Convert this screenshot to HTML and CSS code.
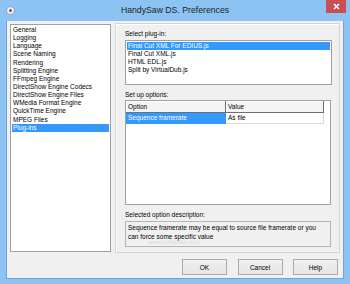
FILE: index.html
```html
<!DOCTYPE html>
<html lang="en">
<head>
    <meta charset="UTF-8">
    <title>HandySaw DS. Preferences</title>
    <link rel="stylesheet" href="styles.css">
</head>
<body>
    <div class="window">
        <div class="titlebar">
            <span class="app-icon"></span>
            <span class="title">HandySaw DS. Preferences</span>
            <button class="close-button">
                <svg width="7" height="7" viewBox="0 0 7 7"><path d="M1 1L6 6M6 1L1 6" stroke="#fff" stroke-width="1.6"/></svg>
            </button>
        </div>

        <div class="client">
            <div class="main">
                <ul class="page-list">
                    <li>General</li>
                    <li>Logging</li>
                    <li>Language</li>
                    <li>Scene Naming</li>
                    <li>Rendering</li>
                    <li>Splitting Engine</li>
                    <li>FFmpeg Engine</li>
                    <li>DirectShow Engine Codecs</li>
                    <li>DirectShow Engine Files</li>
                    <li>WMedia Format Engine</li>
                    <li>QuickTime Engine</li>
                    <li>MPEG Files</li>
                    <li class="selected">Plug-ins</li>
                </ul>

                <div class="panel">
                    <div class="label">Select plug-in:</div>
                    <ul class="plugin-list">
                        <li class="selected">Final Cut XML For EDIUS.js</li>
                        <li>Final Cut XML.js</li>
                        <li>HTML EDL.js</li>
                        <li>Split by VirtualDub.js</li>
                    </ul>

                    <div class="label spaced">Set up options:</div>
                    <div class="options">
                        <div class="options-row options-header">
                            <div class="cell">Option</div>
                            <div class="cell">Value</div>
                        </div>
                        <div class="options-row">
                            <div class="cell selected">Sequence framerate</div>
                            <div class="cell">As file</div>
                        </div>
                    </div>

                    <div class="label spaced">Selected option description:</div>
                    <div class="description">
                        <div>Sequence framerate may be equal to source file framerate or you</div>
                        <div>can force some specific value</div>
                        <span class="watermark">www.softpedia.com</span>
                    </div>
                </div>
            </div>

            <div class="buttons">
                <button class="dialog-button">OK</button>
                <button class="dialog-button">Cancel</button>
                <button class="dialog-button">Help</button>
            </div>
        </div>
    </div>
</body>
</html>
```

FILE: styles.css
```css
/* Base */
body {
    margin: 0;
    font-family: "Liberation Sans", Arial, sans-serif;
    font-size: 6.5px;
    color: #000;
    background-color: #8cc3f2;
}

ul {
    list-style: none;
    margin: 0;
}

.window {
    width: 350px;
    height: 284px;
    display: flex;
    flex-direction: column;
    background-color: #8cc3f2;
}

/* Title bar */
.titlebar {
    height: 21px;
    display: grid;
    grid-template-columns: 1fr auto 1fr;
    align-items: start;
}

.app-icon {
    margin: 7px 0 0 7px;
    width: 7px;
    height: 7px;
    box-sizing: border-box;
    border-radius: 50%;
    background-color: #50607e;
    border: 2px solid #eef0f4;
    box-shadow: 0 0 0 0.6px #8a909c;
}

.title {
    font-size: 8.7px;
    line-height: 20px;
    color: #1e1e1e;
}

.close-button {
    justify-self: end;
    margin-right: 4px;
    width: 20px;
    height: 13px;
    padding: 0;
    border: none;
    background-color: #c75050;
    display: flex;
    align-items: center;
    justify-content: center;
}

/* Client area */
.client {
    flex: 1;
    margin: 0 6px 5px 6px;
    padding: 2px 3px 0 3px;
    background-color: #f0f0f0;
    border: 1px solid #74a3d1;
    border-top: none;
    display: flex;
    flex-direction: column;
}

.main {
    display: flex;
    gap: 4px;
    height: 230px;
}

.page-list {
    margin-top: 1px;
    width: 101px;
    height: 228px;
    box-sizing: border-box;
    padding: 1px;
    border: 1px solid #a0a0a0;
    background-color: #fff;
}

.page-list li,
.plugin-list li {
    height: 8.15px;
    line-height: 8.15px;
    padding-left: 1px;
    white-space: nowrap;
}

.selected {
    background-color: #3399ff;
    color: #fff;
}

/* Right panel */
.panel {
    flex: 1;
    box-sizing: border-box;
    padding: 5px 7px 0 9px;
    border: 1px solid #d5d5d5;
    box-shadow: inset 1px 1px #fff;
    display: flex;
    flex-direction: column;
}

.label {
    height: 10px;
    line-height: 10px;
}

.spaced {
    margin-top: 5px;
}

.plugin-list {
    margin-top: 1px;
    height: 45px;
    box-sizing: border-box;
    padding: 1px;
    border: 1px solid #a0a0a0;
    background-color: #fff;
}

.options {
    margin-right: 1px;
    height: 105px;
    box-sizing: border-box;
    border: 1px solid #a0a0a0;
    background-color: #fff;
}

.options-row {
    display: grid;
    grid-template-columns: 100px 98px;
    height: 11px;
}

.options-row .cell {
    padding-left: 2px;
    line-height: 10px;
    border-right: 1px solid #d9d9d9;
    border-bottom: 1px solid #d9d9d9;
    white-space: nowrap;
}

.options-row .cell.selected {
    border-color: #3399ff;
}

.options-header {
    height: 12px;
}

.options-header .cell {
    line-height: 11px;
    background-color: #f3f3f3;
    border-right: 1px solid #6f6f6f;
    border-bottom: 1px solid #6f6f6f;
    box-shadow: inset 1px 1px #fff;
}

.description {
    position: relative;
    margin-top: 1px;
    margin-right: 1px;
    height: 26px;
    box-sizing: border-box;
    padding: 1px 2px;
    line-height: 9px;
    border: 1px solid #b5b5b5;
    background-color: #f0f0f0;
    white-space: nowrap;
}

.watermark {
    position: absolute;
    left: 22px;
    top: 17px;
    font-size: 6px;
    line-height: 6px;
    color: #dadada;
}

/* Buttons */
.buttons {
    display: flex;
    justify-content: flex-end;
    gap: 10.5px;
    padding: 6px 2px 0 0;
}

.dialog-button {
    width: 45px;
    height: 16px;
    padding: 0;
    font-family: inherit;
    font-size: 6.5px;
    color: #000;
    border: 1px solid #acacac;
    background: linear-gradient(#f0f0f0, #e5e5e5);
}
```
